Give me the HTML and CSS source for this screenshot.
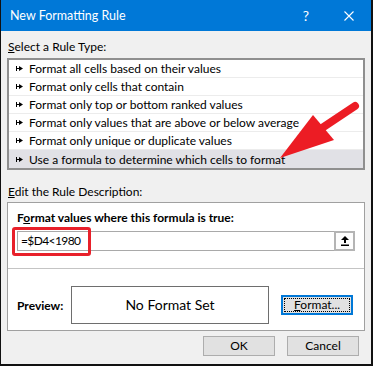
FILE: index.html
```html
<!DOCTYPE html>
<html>
<head>
<meta charset="UTF-8">
<title>New Formatting Rule</title>
<link rel="stylesheet" href="styles.css">
</head>
<body>
<div class="dialog">
  <div class="titlebar">
    <span class="title">New Formatting Rule</span>
    <span class="help">?</span>
    <svg class="close" width="10" height="10" viewBox="0 0 10 10"><path d="M0.5 0.5L9.5 9.5M9.5 0.5L0.5 9.5" stroke="#fff" stroke-width="1.1" fill="none"/></svg>
  </div>

  <div class="content">
    <div class="label"><u>S</u>elect a Rule Type:</div>
    <ul class="rule-list">
      <li><svg class="bullet" width="7" height="5" viewBox="0 0 7 5"><path d="M0 0h1v5H0zM1 2h2v1H1zM3 0l4 2.5L3 5z"/></svg>Format all cells based on their values</li>
      <li><svg class="bullet" width="7" height="5" viewBox="0 0 7 5"><path d="M0 0h1v5H0zM1 2h2v1H1zM3 0l4 2.5L3 5z"/></svg>Format only cells that contain</li>
      <li><svg class="bullet" width="7" height="5" viewBox="0 0 7 5"><path d="M0 0h1v5H0zM1 2h2v1H1zM3 0l4 2.5L3 5z"/></svg>Format only top or bottom ranked values</li>
      <li><svg class="bullet" width="7" height="5" viewBox="0 0 7 5"><path d="M0 0h1v5H0zM1 2h2v1H1zM3 0l4 2.5L3 5z"/></svg>Format only values that are above or below average</li>
      <li><svg class="bullet" width="7" height="5" viewBox="0 0 7 5"><path d="M0 0h1v5H0zM1 2h2v1H1zM3 0l4 2.5L3 5z"/></svg>Format only unique or duplicate values</li>
      <li class="selected"><svg class="bullet" width="7" height="5" viewBox="0 0 7 5"><path d="M0 0h1v5H0zM1 2h2v1H1zM3 0l4 2.5L3 5z"/></svg>Use a formula to determine which cells to format</li>
    </ul>

    <div class="label label-edit"><u>E</u>dit the Rule Description:</div>
    <div class="desc">
      <div class="desc-top">
        <div class="desc-title">F<u>o</u>rmat values where this formula is true:</div>
        <div class="formula-row">
          <div class="formula">=$D4&lt;1980</div>
          <div class="ref-btn">
            <svg width="8" height="10" viewBox="0 0 8 10"><path d="M4 0L8 4H5V7H3V4H0Z"/><rect x="0" y="8.5" width="8" height="1.5"/></svg>
          </div>
        </div>
      </div>
      <div class="desc-preview">
        <span class="preview-label">Preview:</span>
        <div class="preview-box">No Format Set</div>
        <div class="btn btn-focus"><u>F</u>ormat...</div>
      </div>
    </div>

    <div class="actions">
      <div class="btn">OK</div>
      <div class="btn">Cancel</div>
    </div>
  </div>

  <div class="highlight"></div>
  <svg class="callout" width="373" height="366" viewBox="0 0 373 366">
    <line x1="322" y1="128" x2="355" y2="106" stroke="#ec1c24" stroke-width="8" stroke-linecap="round"/>
    <polygon points="280,158 313,115 334,140" fill="#ec1c24"/>
  </svg>
</div>
</body>
</html>
```

FILE: styles.css
```css
* {
  font-family: Lato, "Liberation Sans", sans-serif;
  box-sizing: border-box;
}
body {
  margin: 0;
}
.dialog {
  position: relative;
  width: 373px;
  height: 366px;
  background-color: #F0F0F0;
  border-left: 1px solid #111;
  border-right: 2px solid #111;
  border-bottom: 2px solid #111;
  font-size: 12px;
  color: #000;
}

.titlebar {
  display: flex;
  align-items: center;
  height: 31px;
  padding-left: 9px;
  background-color: #0078D7;
  color: #fff;
}
.title {
  flex: 1;
  font-size: 12.5px;
  line-height: 16px;
}
.help {
  font-size: 14px;
  line-height: 16px;
}
.close {
  margin: 0 17px 0 35px;
}

.content {
  padding: 8px 6px 0 6px;
}
.label {
  line-height: 16px;
  padding-left: 1px;
}
.label-edit {
  margin-top: 14px;
}

.rule-list {
  list-style: none;
  margin: 3px 0 0 0;
  padding: 0;
  border: 2px solid #8f8f8f;
  background-color: #fff;
}
.rule-list li {
  display: flex;
  align-items: center;
  height: 18px;
  padding-left: 7px;
  border-bottom: 1px solid #ececec;
  line-height: 17px;
}
.rule-list li.selected {
  border-bottom: none;
  background-color: #e1e1e6;
}
.bullet {
  margin-right: 6px;
}

.desc {
  margin-top: 2px;
  border: 1px solid #a0a0a0;
  background-color: #fff;
}
.desc-top {
  padding: 7px 9px 17px 9px;
}
.desc-title {
  font-weight: bold;
  line-height: 16px;
}
.formula-row {
  display: flex;
  height: 20px;
  margin-top: 5px;
}
.formula {
  flex: 1;
  border: 1px solid #a9a9a9;
  border-right: none;
  padding-left: 3px;
  line-height: 18px;
  letter-spacing: -0.6px;
}
.ref-btn {
  display: flex;
  align-items: center;
  justify-content: center;
  width: 21px;
  border: 2px solid #b4b4b4;
  background-color: #fdfdfd;
}

.desc-preview {
  display: flex;
  align-items: center;
  border-top: 1px solid #c4c4c4;
  padding: 17px 11px 6px 9px;
}
.preview-label {
  width: 54px;
  font-weight: bold;
}
.preview-box {
  width: 199px;
  height: 38px;
  border: 1px solid #6e6e6e;
  text-align: center;
  line-height: 36px;
  font-size: 14px;
}

.btn {
  width: 72px;
  height: 20px;
  border: 1px solid #adadad;
  background-color: #e1e1e1;
  text-align: center;
  line-height: 18px;
}
.btn-focus {
  margin-left: 12px;
  border: 2px solid #0078D7;
  line-height: 16px;
  outline: 1px dotted #000;
  outline-offset: -4px;
}
.actions {
  display: flex;
  justify-content: flex-end;
  gap: 12px;
  margin-top: 5px;
  padding-right: 6px;
}

.highlight {
  position: absolute;
  left: 11px;
  top: 227px;
  width: 79px;
  height: 29px;
  border: 3px solid #e8202a;
  border-radius: 3px;
}
.callout {
  position: absolute;
  left: -1px;
  top: 0;
  pointer-events: none;
}
```
